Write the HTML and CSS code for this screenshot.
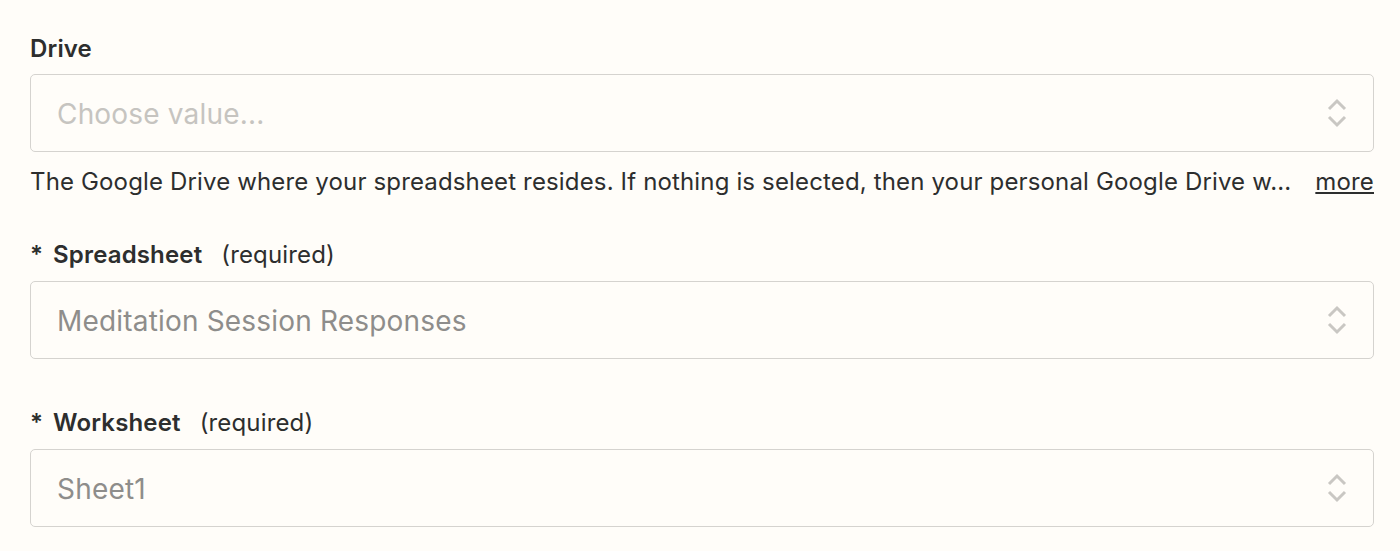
FILE: index.html
```html
<!DOCTYPE html>
<html>
<head>
<meta charset="utf-8">
<link rel="stylesheet" href="styles.css">
</head>
<body>
<div class="form">
  <div class="field">
    <div class="label"><span class="name">Drive</span></div>
    <div class="select">
      <span class="placeholder">Choose value...</span>
      <svg class="chev" width="20" height="30" viewBox="0 0 20 30"><path d="M2 11 L10 3 L18 11 M2 19 L10 27 L18 19" fill="none" stroke="#c9c7c3" stroke-width="3"/></svg>
    </div>
    <div class="help">
      <span class="help-text">The Google Drive where your spreadsheet resides. If nothing is selected, then your personal Google Drive w...</span>
      <a class="more">more</a>
    </div>
  </div>
  <div class="field">
    <div class="label required"><span class="star">*</span><span class="name">Spreadsheet</span><span class="req">(required)</span></div>
    <div class="select">
      <span class="value">Meditation Session Responses</span>
      <svg class="chev" width="20" height="30" viewBox="0 0 20 30"><path d="M2 11 L10 3 L18 11 M2 19 L10 27 L18 19" fill="none" stroke="#c9c7c3" stroke-width="3"/></svg>
    </div>
  </div>
  <div class="field">
    <div class="label required"><span class="star">*</span><span class="name">Worksheet</span><span class="req">(required)</span></div>
    <div class="select">
      <span class="value">Sheet1</span>
      <svg class="chev" width="20" height="30" viewBox="0 0 20 30"><path d="M2 11 L10 3 L18 11 M2 19 L10 27 L18 19" fill="none" stroke="#c9c7c3" stroke-width="3"/></svg>
    </div>
  </div>
</div>
</body>
</html>
```

FILE: styles.css
```css
html, body {
  margin: 0;
  padding: 0;
  background: #fffdf9;
}
body {
  font-family: Inter, "Noto Sans", sans-serif;
  color: #2d2e2e;
}
.form {
  padding: 34px 26px 0 30px;
  display: flex;
  flex-direction: column;
}
.field {
  display: flex;
  flex-direction: column;
}
.field + .field {
  margin-top: 43px;
}
.field:last-child {
  margin-top: 49px;
}
.label {
  font-size: 24px;
  line-height: 30px;
  display: flex;
  align-items: baseline;
  margin-bottom: 10px;
  letter-spacing: 0.15px;
}
.label.required {
  margin-bottom: 11px;
}
.star {
  font-weight: 600;
  margin-right: 10px;
}
.name {
  font-weight: 600;
}
.req {
  margin-left: 19px;
  font-weight: 400;
}
.select {
  height: 78px;
  box-sizing: border-box;
  border: 1px solid #d5d3cf;
  border-radius: 5px;
  display: flex;
  align-items: center;
  justify-content: space-between;
  padding: 2px 26px 0 26px;
  font-size: 28px;
  letter-spacing: 0.18px;
}
.chev {
  display: block;
  margin-top: -2px;
}
.placeholder {
  color: #c6c4c0;
}
.value {
  color: #8e8d8b;
}
.help {
  display: flex;
  justify-content: space-between;
  align-items: baseline;
  margin-top: 15px;
  font-size: 24px;
  line-height: 30px;
  letter-spacing: 0.15px;
  white-space: nowrap;
}
.help-text {
  overflow: hidden;
  min-width: 0;
}
.more {
  text-decoration: underline;
  color: #2d2e2e;
  margin-left: 16px;
  flex-shrink: 0;
}
```
